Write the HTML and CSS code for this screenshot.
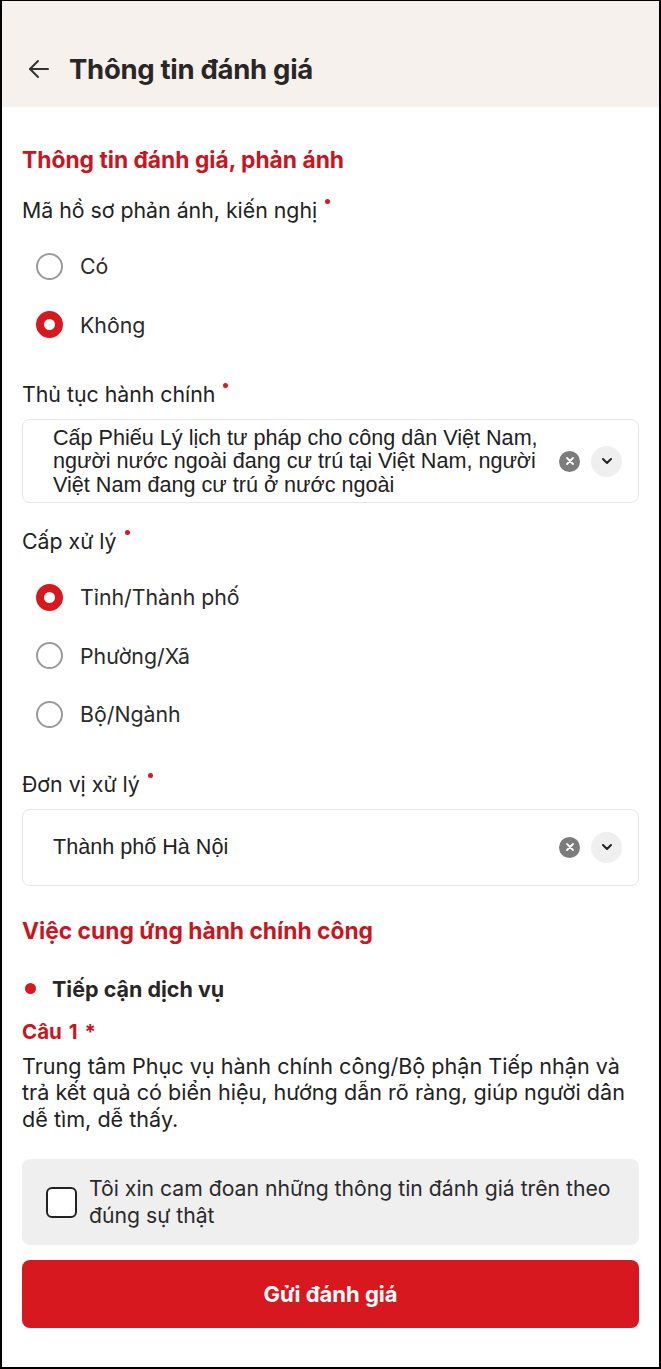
FILE: index.html
```html
<!DOCTYPE html>
<html lang="vi">
<head>
  <meta charset="UTF-8">
  <meta name="viewport" content="width=device-width, initial-scale=1.0">
  <title>Thông tin đánh giá</title>
  <link rel="stylesheet" href="styles.css">
</head>
<body>
  <div class="screen">
    <header class="topbar">
      <svg class="back" width="24" height="24" viewBox="0 0 24 24" fill="none" stroke="#333" stroke-width="2" stroke-linecap="round" stroke-linejoin="round">
        <path d="M21 12H3"/>
        <path d="M11 4l-8 8 8 8"/>
      </svg>
      <h1>Thông tin đánh giá</h1>
    </header>

    <main class="form">
      <h2 class="section-title">Thông tin đánh giá, phản ánh</h2>

      <div class="label">Mã hồ sơ phản ánh, kiến nghị <span class="req"></span></div>
      <div class="radios">
        <label class="radio"><span class="dot"></span>Có</label>
        <label class="radio checked"><span class="dot"></span>Không</label>
      </div>

      <div class="label">Thủ tục hành chính <span class="req"></span></div>
      <div class="select tall">
        <div class="select-text">Cấp Phiếu Lý lịch tư pháp cho công dân Việt Nam, người nước ngoài đang cư trú tại Việt Nam, người Việt Nam đang cư trú ở nước ngoài</div>
        <span class="clear">
          <svg width="10" height="10" viewBox="0 0 10 10" stroke="#fff" stroke-width="1.8" stroke-linecap="round"><path d="M2 2l6 6M8 2l-6 6"/></svg>
        </span>
        <span class="chevron">
          <svg width="14" height="14" viewBox="0 0 14 14" fill="none" stroke="#222" stroke-width="2" stroke-linecap="round" stroke-linejoin="round"><path d="M3 5l4 4 4-4"/></svg>
        </span>
      </div>

      <div class="label">Cấp xử lý <span class="req"></span></div>
      <div class="radios">
        <label class="radio checked"><span class="dot"></span>Tỉnh/Thành phố</label>
        <label class="radio"><span class="dot"></span>Phường/Xã</label>
        <label class="radio"><span class="dot"></span>Bộ/Ngành</label>
      </div>

      <div class="label">Đơn vị xử lý <span class="req"></span></div>
      <div class="select">
        <div class="select-text">Thành phố Hà Nội</div>
        <span class="clear">
          <svg width="10" height="10" viewBox="0 0 10 10" stroke="#fff" stroke-width="1.8" stroke-linecap="round"><path d="M2 2l6 6M8 2l-6 6"/></svg>
        </span>
        <span class="chevron">
          <svg width="14" height="14" viewBox="0 0 14 14" fill="none" stroke="#222" stroke-width="2" stroke-linecap="round" stroke-linejoin="round"><path d="M3 5l4 4 4-4"/></svg>
        </span>
      </div>

      <h2 class="section-title second">Việc cung ứng hành chính công</h2>

      <div class="group"><span class="bullet"></span>Tiếp cận dịch vụ</div>
      <div class="question">Câu 1 *</div>
      <p class="question-text">Trung tâm Phục vụ hành chính công/Bộ phận Tiếp nhận và trả kết quả có biển hiệu, hướng dẫn rõ ràng, giúp người dân dễ tìm, dễ thấy.</p>

      <label class="agree">
        <span class="box"></span>
        <span>Tôi xin cam đoan những thông tin đánh giá trên theo đúng sự thật</span>
      </label>

      <button class="submit">Gửi đánh giá</button>
    </main>
  </div>
</body>
</html>
```

FILE: styles.css
```css
* {
  box-sizing: border-box;
}
body {
  margin: 0;
  font-family: Inter, "Noto Sans", sans-serif;
  color: #222;
  background: #fff;
}
.screen {
  width: 661px;
  height: 1369px;
  border: 2px solid #000;
  border-top-width: 1px;
  overflow: hidden;
  background: #fff;
}
.topbar {
  height: 106px;
  background: #f6f1ed;
  display: flex;
  align-items: center;
  padding: 30px 0 0 25px;
}
.back {
  flex: none;
}
.topbar h1 {
  margin: 0 0 0 18px;
  font-size: 27.5px;
  font-weight: 700;
  letter-spacing: -0.3px;
  color: #2b2626;
}
.form {
  padding: 0 20px;
}
.section-title {
  margin: 39px 0 0;
  font-size: 22.8px;
  font-weight: 700;
  color: #c8161e;
  line-height: 28px;
}
.section-title.second {
  margin-top: 31px;
}
.label {
  margin-top: 23px;
  font-size: 21.3px;
  line-height: 26px;
  color: #222;
}
.select + .label {
  margin-top: 25px;
}
.req {
  display: inline-block;
  width: 5px;
  height: 5px;
  border-radius: 50%;
  background: #d7191f;
  vertical-align: 14px;
  margin-left: 2px;
}
.radios {
  display: flex;
  flex-direction: column;
  padding: 14px 0 4px 14px;
}
.radio {
  display: flex;
  align-items: center;
  height: 58.5px;
  font-size: 21.3px;
  color: #2a2a2a;
}
.radio .dot {
  width: 27px;
  height: 27px;
  border-radius: 50%;
  border: 2px solid #9a9a9a;
  margin-right: 17px;
  flex: none;
}
.radio.checked .dot {
  border: 8.5px solid #d7191f;
  background: #fff;
}
.select {
  margin-top: 12px;
  display: flex;
  align-items: center;
  min-height: 77px;
  border: 1px solid #e6e6e6;
  border-radius: 8px;
  padding: 5px 16px 5px 30px;
}
.select.tall {
  min-height: 84px;
}
.select-text {
  flex: 1;
  font-family: "Liberation Sans", Arial, sans-serif;
  font-size: 21.6px;
  line-height: 23.5px;
  color: #222;
  padding-right: 4px;
}
.clear {
  flex: none;
  width: 21px;
  height: 21px;
  border-radius: 50%;
  background: #7c7c7c;
  display: flex;
  align-items: center;
  justify-content: center;
}
.chevron {
  flex: none;
  width: 31px;
  height: 31px;
  border-radius: 50%;
  background: #efefef;
  display: flex;
  align-items: center;
  justify-content: center;
  margin-left: 11px;
}
.group {
  display: flex;
  align-items: center;
  margin-top: 31px;
  font-size: 21.5px;
  font-weight: 700;
  color: #2b2626;
}
.bullet {
  width: 11px;
  height: 11px;
  border-radius: 50%;
  background: #d7191f;
  margin: 0 16px 0 3px;
}
.question {
  margin-top: 17px;
  font-size: 20.5px;
  font-weight: 700;
  word-spacing: 2px;
  color: #c8161e;
}
.question-text {
  margin: 9px 0 0;
  font-size: 21.6px;
  line-height: 26.5px;
  color: #222;
}
.agree {
  margin-top: 27px;
  display: flex;
  align-items: center;
  background: #efefef;
  border-radius: 8px;
  min-height: 86px;
  padding: 10px 24px;
  font-size: 21.2px;
  line-height: 27px;
  color: #2a2a2a;
}
.agree .box {
  flex: none;
  width: 31px;
  height: 31px;
  border: 2px solid #222;
  border-radius: 6px;
  background: #fff;
  margin-right: 12px;
}
.submit {
  display: block;
  width: 100%;
  margin-top: 15px;
  height: 68px;
  border: none;
  border-radius: 8px;
  background: #d7191f;
  color: #fff;
  font-family: Inter, "Noto Sans", sans-serif;
  font-size: 22px;
  font-weight: 700;
}
```
